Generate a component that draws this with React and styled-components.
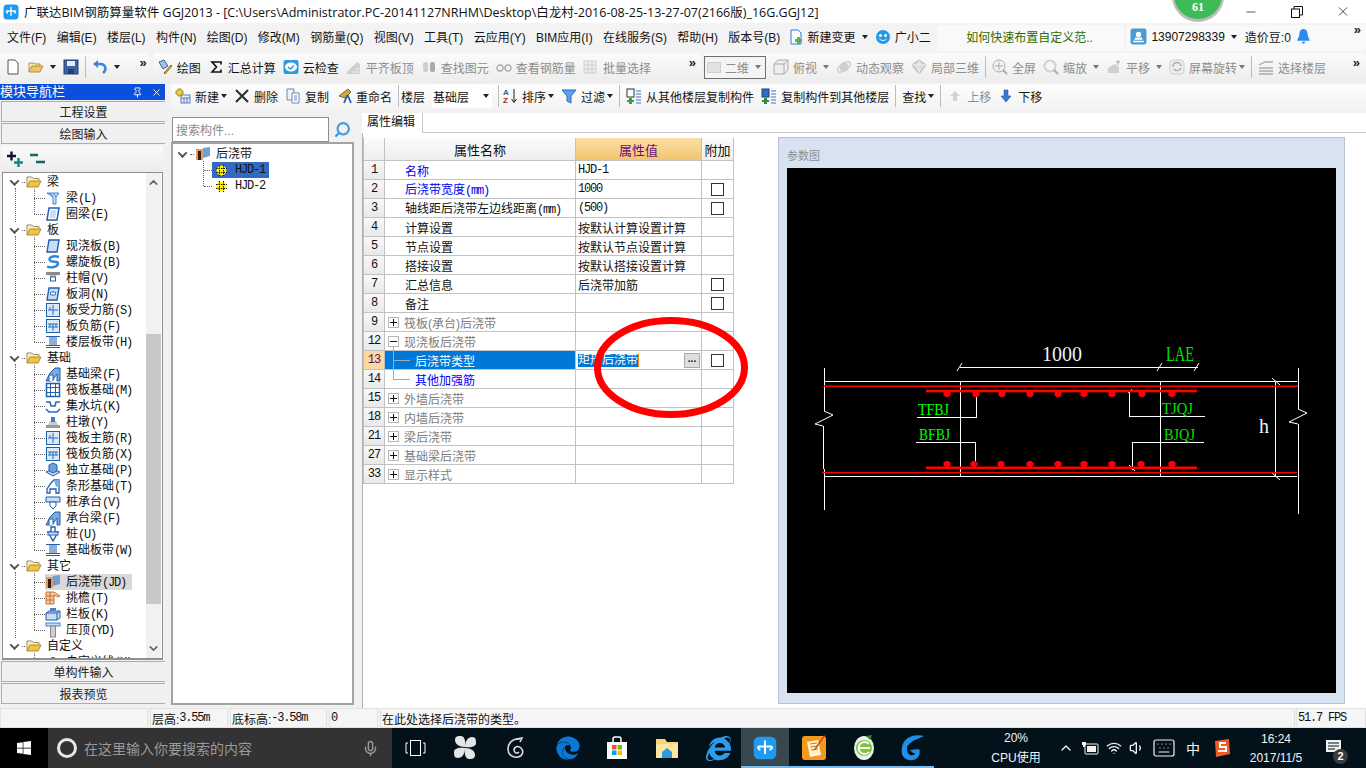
import React from "react";
import styled, { createGlobalStyle } from "styled-components";
import { FaEdge, FaInternetExplorer, FaWindows } from "react-icons/fa";
import { Mic, ChevronUp, Wifi, Volume1, Keyboard, Minus, X, Pin, Search } from "lucide-react";

const GlobalStyle = createGlobalStyle`
  html, body { margin: 0; padding: 0; overflow: hidden; }
  body { font-family: "Liberation Sans", "Noto Sans CJK SC", sans-serif; font-size: 12px; color: #111; }
  * { box-sizing: border-box; }
`;

const Page = styled.div`
  width: 1366px;
  height: 768px;
  display: flex;
  flex-direction: column;
  background: #f1f1f1;
  overflow: hidden;
  position: relative;
`;

/* title bar */
const TitleBar = styled.div`
  height: 23px;
  background: #fff;
  display: flex;
  align-items: center;
  padding-left: 3px;
  gap: 5px;
  position: relative;
`;
const TitleText = styled.div`
  font-family: "Open Sans", "Noto Sans CJK SC", sans-serif;
  font-size: 12.5px;
  white-space: nowrap;
  color: #111;
`;
const WindowButtons = styled.div`
  margin-left: auto;
  display: flex;
  align-items: center;
  width: 138px;
  color: #111;
  svg { flex: 1; }
`;
const Bubble = styled.div`
  position: absolute;
  left: 1174px;
  top: -29px;
  width: 48px;
  height: 48px;
  border-radius: 50%;
  background: #3dbb57;
  box-shadow: 0 1px 0 2px #bdbdbd;
  color: #fff;
  font-family: "Liberation Serif", serif;
  font-weight: bold;
  font-size: 12px;
  display: flex;
  justify-content: center;
  align-items: flex-end;
  padding-bottom: 4px;
`;

/* menu */
const MenuBar = styled.div`
  height: 30px;
  background: #f3f3f3;
  display: flex;
  align-items: center;
  padding: 0 0 3px 7px;
  gap: 10.3px;
`;
const MenuItem = styled.span`
  white-space: nowrap;
  color: #151515;
`;
const MenuGroup = styled.div`
  display: flex;
  align-items: center;
  gap: 4px;
  margin-left: -3px;
  white-space: nowrap;
`;
const TipTab = styled.div`
  width: 187px;
  height: 26px;
  margin: 3px 0 0 -4px;
  background: #f9f9f9;
  border-radius: 3px;
  color: #2f6a00;
  display: flex;
  align-items: center;
  padding: 0 0 3px 29px;
`;
const UserBlock = styled.div`
  display: flex;
  align-items: center;
  flex: 1;
  height: 26px;
  background: #f9f9f9;
  border-radius: 3px;
  margin: 3px 0 0 -8px;
  padding: 0 5px 3px 4px;
  gap: 4px;
`;
const BeanText = styled.span`
  margin-left: 4px;
`;
const More = styled.span`
  font-family: "Liberation Sans", sans-serif;
  font-weight: bold;
  font-size: 13px;
  line-height: 10px;
  align-self: flex-start;
  margin-top: ${(p) => p.$top ?? 5}px;
  margin-left: ${(p) => (p.$auto ? "auto" : "0")};
  color: #222;
`;

/* toolbars */
const ToolRow = styled.div`
  height: 30px;
  display: flex;
  align-items: stretch;
  background: #f1f1f1;
`;
const ToolSegment = styled.div`
  width: ${(p) => p.$w}px;
  margin-left: ${(p) => p.$ml || 0}px;
  padding: 0 ${(p) => p.$pr || 0}px 2px ${(p) => p.$pl || 0}px;
  background: linear-gradient(#fbfbfb, #ececec);
  border-radius: 3px;
  display: flex;
  align-items: center;
  gap: 7px;
`;
const ToolItem = styled.div`
  display: flex;
  align-items: center;
  gap: 4px;
  white-space: nowrap;
  color: ${(p) => (p.$off ? "#8d8d8d" : "#151515")};
`;
const Caret = styled.i`
  width: 0;
  height: 0;
  flex: none;
  margin-left: ${(p) => (p.$tight ? -2 : 2)}px;
  border-left: 3.5px solid transparent;
  border-right: 3.5px solid transparent;
  border-top: 4px solid ${(p) => (p.$off ? "#777" : "#222")};
`;
const Sep = styled.i`
  width: 1px;
  height: 22px;
  background: #bdbdbd;
  margin: 0 ${(p) => p.$r ?? -1}px 0 -1px;
`;
const ViewCombo = styled.div`
  width: 62px;
  height: 23px;
  border: 1px solid #6f6f6f;
  background: #f4f4f4;
  display: flex;
  align-items: center;
  gap: 4px;
  padding-left: 2px;
  white-space: nowrap;
  color: #8d8d8d;
`;
const ComboSwatch = styled.i`
  width: 14px;
  height: 11px;
  flex: none;
  background: #e2e2e2;
  border: 1px solid #cfcfcf;
`;
const ToolbarTwo = styled.div`
  height: 26px;
  background: linear-gradient(#fdfdfd, #f3f3f3);
  display: flex;
  align-items: center;
  gap: 7px;
  padding: 0 0 2px 4px;
`;
const FloorCombo = styled.div`
  width: 60px;
  height: 24px;
  background: #fff;
  display: flex;
  align-items: center;
  justify-content: space-between;
  padding: 0 3px 0 1px;
`;

/* body */
const Body = styled.div`
  height: 625px;
  display: flex;
  padding-top: 1px;
`;
const NavColumn = styled.div`
  width: 165px;
  display: flex;
  flex-direction: column;
`;
const NavHeader = styled.div`
  height: 16px;
  background: #0a50dc;
  color: #fff;
  font-size: 13px;
  display: flex;
  align-items: center;
  line-height: 16px;
  svg:first-of-type { margin-left: auto; }
  svg:last-of-type { margin: 0 3px 0 8px; }
`;
const NavButton = styled.div`
  height: 21px;
  margin: 1px 0 0 1px;
  background: #f0f0f0;
  border: 1px solid #adadad;
  border-width: 1px 0 1px 1px;
  display: flex;
  align-items: center;
  justify-content: center;
  color: #222;
`;
const ExpandBar = styled.div`
  height: 26px;
  margin: 2px 2px 0;
  background: linear-gradient(#fafafa, #ececec);
  display: flex;
  align-items: center;
  padding-left: 5px;
  gap: 6px;
`;
const TreeFrame = styled.div`
  height: 488px;
  margin: 0 2px;
  background: #fff;
  border: 1px solid #8f8f8f;
  border-bottom-width: 2px;
  display: flex;
  overflow: hidden;
`;
const TreeBody = styled.div`
  flex: 1;
  overflow: hidden;
  padding-top: 1px;
`;
const Scrollbar = styled.div`
  width: 15px;
  margin-right: 1px;
  background: #f1f1f1;
  display: flex;
  flex-direction: column;
  align-items: center;
  color: #666;
`;
const ScrollThumb = styled.div`
  width: 15px;
  height: 270px;
  background: #c8c8c8;
`;
const ScrollGap = styled.div`
  height: ${(p) => p.$h}px;
  flex: ${(p) => (p.$fill ? 1 : "none")};
  display: flex;
  align-items: center;
`;
const Group = styled.div`
  position: relative;
  &::before {
    content: "";
    position: absolute;
    left: 12px;
    top: 14px;
    bottom: 0;
    border-left: 1px dotted #666;
    display: ${(p) => (p.$open ? "block" : "none")};
  }
`;
const GroupRow = styled.div`
  height: 16px;
  display: flex;
  align-items: center;
  padding-left: ${(p) => p.$pad || 8}px;
  gap: 1px;
  line-height: 16px;
  font-size: 12px;
`;
const Chevron = styled.i`
  width: 7px;
  height: 7px;
  border: solid #555;
  border-width: 0 2px 2px 0;
  transform: rotate(45deg) translate(-1px, -1px);
  margin-right: 3px;
  flex: none;
`;
const DotLead = styled.i`
  width: ${(p) => p.$w || 3}px;
  border-top: 1px dotted #666;
  flex: none;
`;
const GroupName = styled.span`
  margin-left: 4px;
`;
const Leaves = styled.div`
  position: relative;
  &::before {
    content: "";
    position: absolute;
    left: ${(p) => p.$x || 31}px;
    top: -1px;
    bottom: 8px;
    border-left: 1px dotted #666;
  }
`;
const Leaf = styled.div`
  height: 16px;
  display: flex;
  align-items: center;
  margin-left: ${(p) => p.$x || 31}px;
  line-height: 16px;
  white-space: nowrap;
`;
const LeafLead = styled.i`
  width: ${(p) => p.$w || 11}px;
  border-top: 1px dotted #666;
  flex: none;
`;
const LeafLabel = styled.div`
  display: flex;
  align-items: center;
  height: 16px;
  gap: ${(p) => p.$gap ?? 5}px;
  padding-right: ${(p) => p.$pr || 0}px;
  background: ${(p) => p.$bg || "transparent"};
`;
const GearSlot = styled.span`
  display: flex;
  margin-left: 4px;
`;
const Code = styled.span`
  font-family: "Liberation Mono", monospace;
  font-size: 12px;
  letter-spacing: -1.2px;
`;

/* right side */
const RightSide = styled.div`
  flex: 1;
  margin-left: 6px;
  display: flex;
  flex-direction: column;
`;
const Split = styled.div`
  flex: 1;
  display: flex;
`;
const ListColumn = styled.div`
  width: 183px;
  padding-top: 7px;
  display: flex;
  flex-direction: column;
`;
const SearchRow = styled.div`
  height: 25px;
  display: flex;
  align-items: center;
  gap: 5px;
  padding-left: 1px;
  color: #3d9be9;
  svg { transform: scaleX(-1); }
`;
const SearchBox = styled.div`
  width: 157px;
  height: 25px;
  background: #fff;
  border: 1px solid #8f8f8f;
  color: #8a8a8a;
  font-size: 12px;
  display: flex;
  align-items: center;
  padding-left: 3px;
`;
const ListTree = styled.div`
  height: 563px;
  background: #fff;
  border: 2px solid #a3a3a3;
  padding-top: 2px;
`;
const PropPane = styled.div`
  flex: 1;
  margin-left: 8px;
  padding-top: 3px;
  display: flex;
  flex-direction: column;
`;
const TabStrip = styled.div`
  height: 20px;
  display: flex;
  border-bottom: 1px solid #c8c8c8;
  background: #fff;
`;
const Tab = styled.div`
  width: 61px;
  height: 20px;
  padding-left: 5px;
  background: #fff;
  border-right: 1px solid #c8c8c8;
  line-height: 19px;
`;
const PropBody = styled.div`
  flex: 1;
  display: flex;
  align-items: flex-start;
  padding: 4px 0 3px 0;
  border-left: 1px solid #b0b0b0;
  background: #fff;
  gap: 45px;
`;
const TableWrap = styled.div`
  position: relative;
  width: 371px;
  margin-top: 1px;
  border-left: 1px solid #c0c0c0;
`;
const GridRow = styled.div`
  display: grid;
  grid-template-columns: 21px 191px 126px 32px;
  height: ${(p) => p.$h || 19}px;
  border-bottom: 1px solid #c2c2c2;
`;
const NumCell = styled.div`
  background: ${(p) => (p.$on ? "#fcd9a0" : "linear-gradient(#f8f8f8, #e9e9e9)")};
  border-right: 1px solid #c2c2c2;
  display: flex;
  align-items: center;
  justify-content: center;
  font-family: "Liberation Mono", monospace;
  font-size: 12px;
  letter-spacing: -1px;
  color: ${(p) => (p.$on ? "#60106a" : "#111")};
`;
const HeadCell = styled.div`
  background: ${(p) => (p.$hot ? "linear-gradient(#fbdfa8, #f2c56e)" : "linear-gradient(#fbfbfb, #eeeeee)")};
  color: ${(p) => (p.$hot ? "#6d0b7e" : "#111")};
  border-right: 1px solid #c2c2c2;
  font-size: 13px;
  display: flex;
  align-items: center;
  justify-content: center;
`;
const colors = { blue: "#0000f0", black: "#111", gray: "#7d7d7d", white: "#fff" };
const NameCell = styled.div`
  position: relative;
  display: flex;
  align-items: center;
  gap: 5px;
  padding-left: ${(p) => p.$pad}px;
  color: ${(p) => colors[p.$tone]};
  background: ${(p) => (p.$on ? "#0078d7" : "transparent")};
  border-right: 1px solid #c2c2c2;
  white-space: nowrap;
  &::before {
    content: "";
    display: ${(p) => (p.$branch ? "block" : "none")};
    position: absolute;
    left: 8px;
    top: ${(p) => (p.$branch === "first" ? -4 : -1)}px;
    height: ${(p) => (p.$branch === "first" ? 23 : 10)}px;
    border-left: 1px solid #a9a9a9;
  }
  &::after {
    content: "";
    display: ${(p) => (p.$branch ? "block" : "none")};
    position: absolute;
    left: 8px;
    top: 9px;
    width: 17px;
    border-top: 1px solid #a9a9a9;
  }
`;
const Expander = styled.i`
  width: 11px;
  height: 11px;
  border: 1px solid #b5b5b5;
  position: relative;
  margin-left: -17px;
  flex: none;
  &::before {
    content: "";
    position: absolute;
    left: 1px;
    right: 1px;
    top: 4px;
    border-top: 1px solid #111;
  }
  &::after {
    content: "";
    display: ${(p) => (p.$plus ? "block" : "none")};
    position: absolute;
    top: 1px;
    bottom: 1px;
    left: 4px;
    border-left: 1px solid #111;
  }
`;
const ValueCell = styled.div`
  display: flex;
  align-items: center;
  padding-left: 2px;
  border-right: 1px solid #c2c2c2;
  white-space: nowrap;
  color: #111;
`;
const SelectedValue = styled.span`
  background: #0078d7;
  color: #fff;
  border-right: 1px solid #f28a1c;
  line-height: 13px;
`;
const DotButton = styled.span`
  margin-left: auto;
  margin-right: 1px;
  width: 16px;
  height: 15px;
  background: #dedede;
  border: 1px solid #a9a9a9;
  font-weight: bold;
  font-size: 10px;
  line-height: 9px;
  text-align: center;
`;
const AddCell = styled.div`
  display: flex;
  align-items: center;
  justify-content: center;
  border-right: 1px solid #c2c2c2;
  padding-right: 1px;
`;
const Check = styled.i`
  width: 13px;
  height: 13px;
  border: 1px solid #333;
  background: #fff;
`;
const CircleMark = styled.svg`
  position: absolute;
  left: 230px;
  top: 179px;
  pointer-events: none;
`;
const ParamPanel = styled.div`
  width: 567px;
  height: 567px;
  margin-left: -1px;
  display: flex;
  flex-direction: column;
  padding: 0 8px 10px;
  background: #d7e3f1;
  border: 1px solid #b8c4d2;
`;
const ParamTitle = styled.div`
  height: 30px;
  display: flex;
  align-items: flex-end;
  padding-bottom: 5px;
  color: #8b8f96;
  font-size: 11px;
`;
const Canvas = styled.svg`
  display: block;
  background: #000;
  flex: 1;
  width: 549px;
`;

/* status */
const StatusBar = styled.div`
  height: 20px;
  display: flex;
  gap: 2px;
  background: #f1f1f1;
`;
const StatusCell = styled.div`
  width: ${(p) => p.$w}px;
  margin-left: ${(p) => p.$ml || 0}px;
  background: #f5f5f5;
  border: 1px solid #e2e2e2;
  display: flex;
  align-items: center;
  padding-left: 1px;
  white-space: nowrap;
`;

/* taskbar */
const Taskbar = styled.div`
  height: 40px;
  background: #03121a;
  display: flex;
  align-items: stretch;
  color: #fff;
`;
const StartCell = styled.div`
  width: 48px;
  background: #000;
  display: flex;
  align-items: center;
  justify-content: center;
`;
const CortanaBox = styled.div`
  width: 344px;
  background: #333;
  display: flex;
  align-items: center;
  padding: 0 13px 0 9px;
  gap: 7px;
  color: #9a9a9a;
  font-size: 14px;
  svg { margin-left: auto; }
`;
const CortanaRing = styled.i`
  width: 20px;
  height: 20px;
  border: 3px solid #e8e8e8;
  border-radius: 50%;
  flex: none;
`;
const TaskApps = styled.div`
  width: 544px;
  display: flex;
  align-items: stretch;
`;
const TaskApp = styled.div`
  width: ${(p) => p.$w || 49}px;
  display: flex;
  align-items: center;
  justify-content: center;
  background: ${(p) => (p.$active ? "#39474e" : "transparent")};
  box-shadow: ${(p) => (p.$run ? "inset 0 -2px 0 #76b9ed" : "none")};
`;
const TrayText = styled.div`
  display: flex;
  flex-direction: column;
  align-items: center;
  justify-content: space-around;
  width: ${(p) => p.$w}px;
  margin-left: ${(p) => p.$ml || 0}px;
  padding: 1px 0;
  white-space: nowrap;
  color: #f2f2f2;
`;
const Tray = styled.div`
  display: flex;
  align-items: center;
  gap: 7px;
  margin-left: 17px;
  color: #f2f2f2;
  width: 187px;
  flex: none;
`;
const ImeLabel = styled.span`
  font-size: 14px;
  margin: 0 6px 0 3px;
`;
const NoticeCell = styled.div`
  position: relative;
  flex: 1;
  display: flex;
  align-items: center;
  padding: 0 0 5px 18px;
`;
const NoticeBadge = styled.span`
  position: absolute;
  left: 26px;
  top: 21px;
  width: 15px;
  height: 15px;
  background: #3a3a3a;
  border-radius: 50%;
  font-size: 11px;
  font-weight: bold;
  text-align: center;
  line-height: 15px;
`;

/* drawings */
const blue = "#1f5fb0";
const lite = "#c9ddf6";
const Svg = ({ s = 16, children }) => (
  <svg width={s} height={s} viewBox="0 0 16 16" style={{ flex: "none" }}>{children}</svg>
);
const shapes = {
  beam: <><path d="M2 3h12l-3 4v7H8V7z" fill={lite} stroke="#3b85d6" /><path d="M5 3l3 4M8 3l3 4" stroke="#3b85d6" /></>,
  ring: <><path d="M4 2h10l-2 12H2z" fill="#fff" stroke={blue} strokeWidth="1.5" /><path d="M5.5 4h6l-1 8H4.500z" fill={lite} /></>,
  slab: <path d="M4 2h10l-2 12H2z" fill={lite} stroke={blue} strokeWidth="1.4" />,
  spiral: <path d="M14 3C7 1 3 4 5 6.500s8 0 8 3-6 5-11 3" fill="none" stroke="#2a86d8" strokeWidth="2.4" />,
  cap: <><rect x="1" y="2" width="14" height="3" fill="#8c8c8c" /><path d="M4 5h8l-2 2H6z" fill="#bbb" /><rect x="5.500" y="7" width="5" height="4" fill="#fff" stroke={blue} /></>,
  hole: <><path d="M4 2h10l-2 12H2z" fill={lite} stroke={blue} strokeWidth="1.4" /><rect x="5.500" y="6" width="5" height="3" rx="1" fill="#fff" stroke={blue} /></>,
  plate: <><rect x="1.500" y="1.500" width="13" height="13" fill="#dce9fa" stroke={blue} /><path d="M8 3v10M3 8h10M5 5v3" stroke="#2a6ab8" /></>,
  neg: <><rect x="1.500" y="1.500" width="13" height="13" fill="#dce9fa" stroke={blue} /><path d="M3 6h10M3 9h10M8 6v7M5 6v3M11 6v3" stroke="#2a6ab8" /></>,
  band: <path d="M1 2.500h14M1 13.500h14M1 11.500h14M5 3v8M11 3v8M7 3v8M9 3v8" stroke={blue} fill="none" />,
  fbeam: <><path d="M1 15l4-8 5-5h5v13h-3V8L7 15z" fill="#7ea9dc" stroke={blue} /><path d="M4 15V9h4v6" fill="#fff" stroke={blue} /></>,
  raft: <><rect x="1.500" y="1.500" width="13" height="13" fill="#fff" stroke={blue} strokeWidth="1.5" /><path d="M1.500 5.500h13M1.500 10.500h13M5.500 1.500v13M10.500 1.500v13" stroke={blue} /></>,
  pit: <path d="M1 4h4l1 4h4l1-4h4M1 11l3 3h8l3-3" fill="none" stroke="#2a6ab8" strokeWidth="1.6" />,
  pier: <><rect x="1" y="11" width="14" height="3" fill="#9a9a9a" /><path d="M3 11l2-4h6l2 4z" fill="#c9c9c9" /><rect x="6" y="3" width="4" height="5" fill="#3b7ccb" /></>,
  iso: <><path d="M1 10l7-3 7 3-7 4z" fill={lite} stroke={blue} /><path d="M4 3l4-2 4 2v6l-4 2-4-2z" fill="#6f9fd8" stroke={blue} /></>,
  strip: <><path d="M2 15V11l4-6 3-3h5v13h-3v-4H5v4z" fill="#fff" stroke={blue} strokeWidth="1.3" /><path d="M9 2h5v6l-3 1z" fill="#7ea9dc" /></>,
  pcap: <><path d="M1 3h14v5H1z" fill={lite} stroke={blue} /><path d="M5 8h6v4l-3 3-3-3z" fill="#fff" stroke={blue} /></>,
  pile: <><path d="M6 1h4v5h3l-5 9-5-9h3z" fill="#fff" stroke={blue} strokeWidth="1.4" /><rect x="3" y="6" width="10" height="3" fill={lite} stroke={blue} /></>,
  cast: <><rect x="1" y="3" width="7" height="11" fill="#d7a06a" /><rect x="3" y="5" width="3" height="9" fill="#3a1c0c" /><path d="M8 2l7-1v9l-7 2z" fill="#6f9fd8" /></>,
  eave: <><path d="M1 2h8l6 4-2 1-4-2v9H1z" fill="#f6c9a2" stroke="#c8702e" /><path d="M1 6h8M1 10h8M5 2v12" stroke="#c8702e" /></>,
  rail: <><path d="M1 7l3-2h11v7l-3 2H1z" fill={lite} stroke={blue} /><path d="M1 7h11v7M12 7l3-2" stroke={blue} fill="none" /><rect x="5" y="2" width="6" height="3" fill="#4a83c9" /></>,
  top: <><rect x="1" y="1" width="14" height="3" fill={lite} stroke="#3b85d6" /><rect x="5.500" y="4" width="5" height="11" fill="#cfcfcf" stroke="#888" /></>
};
const TreeIcon = ({ kind }) => <Svg>{shapes[kind]}</Svg>;
const Folder = () => (
  <Svg>
    <path d="M1 13V3h5l1.500 1.500H13V7" fill="#f6eccb" stroke="#a68b52" />
    <path d="M1 13l3-6h11l-3 6z" fill="#f4c33e" stroke="#b08a36" />
  </Svg>
);
const Gear = () => (
  <svg width="11" height="11" viewBox="0 0 11 11">
    <circle cx="5.500" cy="5.500" r="5" fill="#fff200" />
    <path d="M3.500 0v11M7.500 0v11M0 3.500h11M0 7.500h11" stroke="#111" strokeDasharray="1.500 1" />
  </svg>
);

const gray = "#cfcfcf";
const grayDark = "#ababab";
const tool = {
  newDoc: <path d="M3 1h7l3 3v11H3z" fill="#fff" stroke="#555" />,
  open: <><path d="M1 13V4h5l1 1h5v2" fill="#f7e8b5" stroke="#b1904a" /><path d="M1 13l3-6h11l-3 6z" fill="#f0c566" stroke="#b1904a" /></>,
  save: <><rect x="1" y="1" width="14" height="14" fill="#3a63a8" stroke="#223f74" /><rect x="4" y="2" width="8" height="5" fill="#e4ecf7" /><rect x="5" y="10" width="6" height="5" fill="#223f74" /></>,
  undo: <><path d="M11 14c4-3 3-9-3-9H4" fill="none" stroke="#3f86d8" strokeWidth="2.6" /><path d="M6 1L1 5l5 4z" fill="#3f86d8" /></>,
  draw: <><path d="M2 3l5-2 4 6-5 3z" fill="#9cc3ea" stroke="#44638a" /><path d="M7 14l7-8 1 1-7 8z" fill="#e8b93c" stroke="#8b6b1b" /></>,
  cloud: <><rect x="0.500" y="1" width="15" height="14" rx="2" fill="#2b9be0" /><ellipse cx="8" cy="8" rx="6" ry="4.500" fill="#fff" /><path d="M5 8l2.500 2L11 6.500" fill="none" stroke="#2b9be0" strokeWidth="1.5" /></>,
  align: <><path d="M1 13L11 3l3 2v10H1z" fill={gray} /><path d="M6 13h8M9 10h5" stroke="#eee" /></>,
  find: <><rect x="2" y="3" width="5" height="10" rx="2" fill={gray} /><rect x="9" y="3" width="5" height="10" rx="2" fill={grayDark} /></>,
  look: <><path d="M1 9a3 3 0 106 0 3 3 0 10-6 0zM9 9a3 3 0 106 0 3 3 0 10-6 0z" fill="none" stroke={grayDark} strokeWidth="1.3" /><path d="M7 9h2" stroke={grayDark} /></>,
  batch: <><rect x="1" y="2" width="12" height="12" fill="#eee" stroke={gray} /><path d="M1 6h12M1 10h12M5 2v12M9 2v12" stroke={gray} /></>,
  cube: <><path d="M1 5l4-4h10v10l-4 4H1z" fill="#eee" stroke={grayDark} /><path d="M1 5h10v10M11 5l4-4" fill="none" stroke={grayDark} /></>,
  orbit: <><ellipse cx="8" cy="8" rx="7.500" ry="3.500" transform="rotate(-35 8 8)" fill="none" stroke={gray} strokeWidth="1.5" /><circle cx="8" cy="8" r="4.500" fill={gray} /></>,
  local: <><path d="M8 1l7 5-7 9-7-9z" fill="#ddd" stroke={grayDark} /><path d="M1 6h14M8 1v14" stroke="#eee" /></>,
  full: <><circle cx="7" cy="7" r="6" fill="#f2f2f2" stroke={grayDark} /><path d="M7 3v8M3 7h8" stroke={grayDark} /><path d="M11 11l4 4" stroke={grayDark} strokeWidth="2" /></>,
  zoom: <><circle cx="7" cy="7" r="5.500" fill="#f5f5f5" stroke={gray} strokeWidth="2" /><path d="M11 11l4 4" stroke={grayDark} strokeWidth="2" /></>,
  pan: <><path d="M2 14V9l3-2 4-2 4 3v6z" fill={gray} /><path d="M12 1v5M10 3h4" stroke={grayDark} /></>,
  rotate: <><rect x="1" y="1" width="14" height="14" rx="3" fill="#eee" stroke={gray} /><path d="M4 8a4 4 0 018-1M12 9a4 4 0 01-7 1" fill="none" stroke={grayDark} strokeWidth="1.4" /></>,
  floors: <path d="M1 6l6-3h8M1 9h14M1 12h14M1 15h14" fill="none" stroke={grayDark} strokeWidth="1.3" />,
  add: <><rect x="6" y="7" width="9" height="8" fill="#e2ebf7" stroke="#5a7fb5" /><path d="M6 10h9M9 10v5M12 10v5" stroke="#5a7fb5" /><path d="M3 1h3v2h2v3H6v2H3V6H1V3h2z" fill="#f1d447" stroke="#a38d1e" /></>,
  del: <path d="M2 2l12 12M14 2L2 14" stroke="#333" strokeWidth="2.2" />,
  copy: <><path d="M2 1h7v11H2z" fill="#eef3fb" stroke="#6b87b3" /><path d="M7 5h7v10H7z" fill="#fff" stroke="#6b87b3" /><path d="M9 8h3M9 10h3M9 12h3" stroke="#6b87b3" /></>,
  rename: <><path d="M3 8l9-7 3 3-6 6z" fill="#d2a83e" stroke="#7a6a2a" /><path d="M8 15l3-7h1l3 7" fill="none" stroke="#2f5fa8" strokeWidth="1.8" /></>,
  filter: <path d="M1 2h14l-5 6v7l-4-2V8z" fill="#5fa1e6" stroke="#2f6cb5" />,
  fromFloor: <><rect x="1" y="1" width="7" height="8" fill="#fff" stroke="#333" /><path d="M10 3h5M10 6h5M10 9h5M10 12h5M10 15h5" stroke="#3a74bd" /><path d="M3 10h3v2h2v2H6v2H3v-2H1v-2h2z" fill="#3aa043" /></>,
  toFloor: <><rect x="1" y="1" width="7" height="8" fill="#2f6cc5" stroke="#1a3f7a" /><path d="M10 3h5M10 6h5M10 9h5M10 12h5M10 15h5" stroke="#3a74bd" /><path d="M3 10h3v2h2v2H6v2H3v-2H1v-2h2z" fill="#2f8a3a" /></>,
  up: <path d="M8 3l5 5h-3v5H6V8H3z" fill="#d3d3d3" />,
  down: <path d="M6 2h4v6h3l-5 6-5-6h3z" fill="#3f74d0" stroke="#2c55a0" strokeWidth="0.6" />
};
const ToolIcon = ({ kind }) => <Svg>{tool[kind]}</Svg>;
const SigmaIcon = () => (
  <Svg><path d="M3 3h10v2.500M13 3H4l4.500 5L4 13h9v-2.500" fill="none" stroke="#111" strokeWidth="1.6" /></Svg>
);
const SortIcon = () => (
  <Svg>
    <text x="1" y="7" fontSize="8" fontFamily="Liberation Sans" fill="#2f5fa8" fontWeight="bold">A</text>
    <text x="1" y="15" fontSize="8" fontFamily="Liberation Sans" fill="#a02a2a" fontWeight="bold">Z</text>
    <path d="M12 1v13M9.500 11l2.500 3.500 2.500-3.500" fill="none" stroke="#222" />
  </Svg>
);
const AppLogo = ({ s = 16 }) => (
  <Svg s={s}>
    <rect x="0.500" y="0.500" width="15" height="15" rx="3.500" fill="#1e9bf0" />
    <path d="M8 3v9M3.500 7h9M3.500 7a1.500 1.500 0 001.500 2M12.500 7a1.500 1.500 0 01-1.500 2" fill="none" stroke="#fff" strokeWidth="1.3" />
  </Svg>
);
const ExpandAllIcon = ({ minus }) => (
  <Svg>
    {minus ? (
      <path d="M1 4h8M7 11h9" stroke="#0d6a66" strokeWidth="2.4" />
    ) : (
      <>
        <path d="M0 5h9M4.500 0.500v9" stroke="#113" strokeWidth="2.4" />
        <path d="M7 11.500h9M11.500 7v9" stroke="#0d8a7e" strokeWidth="2.4" />
      </>
    )}
  </Svg>
);
const RestoreIcon = () => (
  <svg width="12" height="12" viewBox="0 0 12 12" fill="none" stroke="#111">
    <rect x="0.500" y="3" width="8" height="8.500" />
    <path d="M3 3V0.500h8.500V9H8.500" />
  </svg>
);

const Fan = () => (
  <svg width="24" height="26" viewBox="0 0 24 26">
    <g fill="#e4e4e4">
      <path d="M12 12C6 12 2 9 2 5s3-4 6-4 5 4 4 11z" />
      <path d="M12 12c0-6 3-10 7-10s4 3 4 6-4 5-11 4z" />
      <path d="M12 13c6 0 10 3 10 7s-3 4-6 4-5-4-4-11z" />
      <path d="M12 13c0 6-3 10-7 10s-4-3-4-6 4-5 11-4z" />
    </g>
  </svg>
);
const Swirl = () => (
  <svg width="20" height="24" viewBox="0 0 20 24" fill="none" stroke="#ddd" strokeWidth="1.6">
    <path d="M14 3C7 2 2 7 2 13s5 9 10 8 6-6 3-9-7-1-7 2 3 4 5 2" />
    <path d="M10 3l6-1-2 4" />
  </svg>
);
const Store = () => (
  <svg width="22" height="24" viewBox="0 0 22 24">
    <path d="M1 6h20v17H1z" fill="#fff" />
    <path d="M7 6V3a2 2 0 012-2h4a2 2 0 012 2v3" fill="none" stroke="#fff" strokeWidth="1.5" />
    <rect x="6" y="9" width="4.500" height="4.500" fill="#f25022" />
    <rect x="11.500" y="9" width="4.500" height="4.500" fill="#7fba00" />
    <rect x="6" y="14.500" width="4.500" height="4.500" fill="#00a4ef" />
    <rect x="11.500" y="14.500" width="4.500" height="4.500" fill="#ffb900" />
  </svg>
);
const Explorer = () => (
  <svg width="24" height="24" viewBox="0 0 24 24">
    <path d="M1 3h9l2 3h11v16H1z" fill="#f4d675" />
    <path d="M1 8h22v14H1z" fill="#fbe6a2" />
    <path d="M7 22v-6l5-4 5 4v6z" fill="#2f9ae0" />
  </svg>
);
const Notes = () => (
  <svg width="24" height="26" viewBox="0 0 24 26">
    <rect x="0" y="1" width="24" height="24" rx="3" fill="#f39a1e" />
    <path d="M5 7l11-2 3 15-11 2z" fill="#fff3cf" />
    <path d="M8 9l7-1M8.500 12l7-1M9 15l7-1" stroke="#c47a18" />
    <path d="M22 0l-9 13-2 3 3-2 9-13z" fill="#c8421a" />
  </svg>
);
const GreenE = () => (
  <svg width="24" height="28" viewBox="0 0 24 28">
    <ellipse cx="12" cy="14" rx="10" ry="12" fill="#eee" />
    <circle cx="12" cy="14" r="8" fill="#7cc63a" />
    <path d="M6 14h12M17 10a6 6 0 100 8" fill="none" stroke="#fff" strokeWidth="1.8" />
    <path d="M14 2l6-1-2 5z" fill="#2e8a28" />
  </svg>
);
const BlueG = () => (
  <svg width="26" height="28" viewBox="0 0 26 28">
    <path d="M25 2c-8-2-20 0-22 11s5 14 11 13 8-7 6-11l-9 1 3 3h2c0 3-7 4-8-3s8-10 17-14z" fill="#1f8fe8" />
  </svg>
);
const Power = () => (
  <svg width="18" height="16" viewBox="0 0 18 16" fill="#f2f2f2">
    <rect x="4" y="4" width="13" height="10" rx="1" fill="none" stroke="#f2f2f2" />
    <rect x="6" y="6" width="9" height="6" />
    <path d="M1 2h4v3H1zM2 5h2v2H2z" />
  </svg>
);
const SogouS = () => (
  <svg width="18" height="20" viewBox="0 0 18 20" style={{ flex: "none" }}>
    <path d="M2 3l14-2 1 15-14 3z" fill="#ee5c25" />
    <path d="M13 5H7v4h6v4H5" fill="none" stroke="#fff" strokeWidth="2" />
  </svg>
);
const NoticeIcon = () => (
  <svg width="17" height="14" viewBox="0 0 17 14">
    <path d="M1 1h15v12H1z" fill="#f2f2f2" />
    <path d="M3 4h11M3 7h11M3 10h7" stroke="#03121a" />
  </svg>
);

const Tick = ({ x, y }) => <path d={`M${x - 3} ${y + 4}L${x + 2} ${y - 4}`} stroke="#fff" />;
const Rebars = ({ xs, y }) =>
  xs.map((x) => (
    <path key={x} d={`M${x - 2} ${y - 3}h4v1h1.500v4h-1.500v1h-4v-1h-1.500v-4h1.500z`} fill="#ff0000" />
  ));
const Label = styled.text`
  font-family: "Liberation Serif", serif;
  fill: ${(p) => p.$fill};
`;

const Drawing = () => (
  <Canvas viewBox="787 168 549 525">
    <g fill="none" stroke="#fff" shapeRendering="crispEdges">
      <path d="M824.500 368V411M823.500 426V469M824.500 469V510" />
      <path d="M1298.500 368V409M1298.500 424V514" />
      <path d="M824 381.500H1297M824 476.500H1297" />
      <path d="M960.500 381V476M1160.500 381V476M1275.500 381V476" />
      <path d="M960 367.500H1198" />
      <path d="M917 417.500H976.500V394M916 442.500H975.500V468" />
      <path d="M1129.500 390V416.500H1205M1204 442.500H1132.500V470" />
    </g>
    <g fill="none" stroke="#fff">
      <path d="M824 411l9 4-18 9 8 2" />
      <path d="M1298 409l9 4-18 9 9 2" />
      <path d="M1272 378l8 7M1272 473l8 7M1128 393l4-4M1129 465l6 6" />
    </g>
    <Tick x={960} y={367} />
    <Tick x={1160} y={367} />
    <Tick x={1197} y={367} />
    <g fill="#ff0000">
      <rect x="824" y="385.500" width="474" height="1.500" />
      <rect x="926" y="389.700" width="271" height="2.600" />
      <rect x="926" y="466.500" width="271" height="2.600" />
      <rect x="822" y="471.800" width="475" height="1.500" />
    </g>
    <Rebars xs={[947, 976, 1002, 1030, 1058, 1084, 1112, 1142, 1172]} y={394} />
    <Rebars xs={[947, 974, 1001, 1030, 1058, 1084, 1112, 1141, 1172]} y={464} />
    <Label x="1042" y="361" fontSize="20" textLength="40" lengthAdjust="spacingAndGlyphs" $fill="#e8f2ff">1000</Label>
    <Label x="1166" y="361" fontSize="20" textLength="28" lengthAdjust="spacingAndGlyphs" $fill="#00e000">LAE</Label>
    <Label x="918" y="415" fontSize="16" textLength="31" lengthAdjust="spacingAndGlyphs" $fill="#00ff00">TFBJ</Label>
    <Label x="919" y="440" fontSize="16" textLength="31" lengthAdjust="spacingAndGlyphs" $fill="#00ff00">BFBJ</Label>
    <Label x="1162" y="414" fontSize="16" textLength="31" lengthAdjust="spacingAndGlyphs" $fill="#00e000">TJQJ</Label>
    <Label x="1164" y="440" fontSize="16" textLength="31" lengthAdjust="spacingAndGlyphs" $fill="#00e000">BJQJ</Label>
    <Label x="1259" y="433" fontSize="20" $fill="#e8f2ff">h</Label>
  </Canvas>
);

const menus = ["文件(F)", "编辑(E)", "楼层(L)", "构件(N)", "绘图(D)", "修改(M)", "钢筋量(Q)", "视图(V)", "工具(T)", "云应用(Y)", "BIM应用(I)", "在线服务(S)", "帮助(H)", "版本号(B)"];

const navTree = [
  ["梁", [["beam", "梁", "L"], ["ring", "圈梁", "E"]]],
  ["板", [["slab", "现浇板", "B"], ["spiral", "螺旋板", "B"], ["cap", "柱帽", "V"], ["hole", "板洞", "N"], ["plate", "板受力筋", "S"], ["neg", "板负筋", "F"], ["band", "楼层板带", "H"]]],
  ["基础", [["fbeam", "基础梁", "F"], ["raft", "筏板基础", "M"], ["pit", "集水坑", "K"], ["pier", "柱墩", "Y"], ["plate", "筏板主筋", "R"], ["neg", "筏板负筋", "X"], ["iso", "独立基础", "P"], ["strip", "条形基础", "T"], ["pcap", "桩承台", "V"], ["fbeam", "承台梁", "F"], ["pile", "桩", "U"], ["band", "基础板带", "W"]]],
  ["其它", [["cast", "后浇带", "JD"], ["eave", "挑檐", "T"], ["rail", "栏板", "K"], ["top", "压顶", "YD"]]],
  ["自定义", [["pier", "自定义线", "X"]]]
];

const rows = [
  { n: 1, name: "名称", tone: "blue", value: <Code>HJD-1</Code> },
  { n: 2, name: "后浇带宽度", unit: "(mm)", tone: "blue", value: <Code>1000</Code>, check: true },
  { n: 3, name: "轴线距后浇带左边线距离", unit: "(mm)", tone: "black", value: <Code>(500)</Code>, check: true },
  { n: 4, name: "计算设置", tone: "black", value: "按默认计算设置计算" },
  { n: 5, name: "节点设置", tone: "black", value: "按默认节点设置计算" },
  { n: 6, name: "搭接设置", tone: "black", value: "按默认搭接设置计算" },
  { n: 7, name: "汇总信息", tone: "black", value: "后浇带加筋", check: true },
  { n: 8, name: "备注", tone: "black", check: true },
  { n: 9, name: "筏板(承台)后浇带", tone: "gray", plus: true },
  { n: 12, name: "现浇板后浇带", tone: "gray", minus: true },
  { n: 13, name: "后浇带类型", tone: "white", on: true, branch: "first", check: true },
  { n: 14, name: "其他加强筋", tone: "blue", branch: "last" },
  { n: 15, name: "外墙后浇带", tone: "gray", plus: true },
  { n: 18, name: "内墙后浇带", tone: "gray", plus: true },
  { n: 21, name: "梁后浇带", tone: "gray", plus: true },
  { n: 27, name: "基础梁后浇带", tone: "gray", plus: true },
  { n: 33, name: "显示样式", tone: "gray", plus: true }
];

const PropRow = ({ r }) => (
  <GridRow>
    <NumCell $on={r.on}>{r.n}</NumCell>
    <NameCell $pad={r.branch ? 30 : 20} $tone={r.tone} $on={r.on} $branch={r.branch}>
      {(r.plus || r.minus) && <Expander $plus={r.plus} />}
      <span>{r.name}{r.unit && <Code>{r.unit}</Code>}</span>
    </NameCell>
    <ValueCell>
      {r.on ? <SelectedValue>矩形后浇带</SelectedValue> : r.value}
      {r.on && <DotButton>...</DotButton>}
    </ValueCell>
    <AddCell>{r.check && <Check />}</AddCell>
  </GridRow>
);

export default function App() {
  return (
    <Page>
      <GlobalStyle />
      <TitleBar>
        <AppLogo />
        <TitleText>广联达BIM钢筋算量软件 GGJ2013 - [C:\Users\Administrator.PC-20141127NRHM\Desktop\白龙村-2016-08-25-13-27-07(2166版)_16G.GGJ12]</TitleText>
        <WindowButtons>
          <Minus size={14} strokeWidth={1.2} />
          <RestoreIcon />
          <X size={15} strokeWidth={1.2} />
        </WindowButtons>
        <Bubble>61</Bubble>
      </TitleBar>

      <MenuBar>
        {menus.map((m) => <MenuItem key={m}>{m}</MenuItem>)}
        <MenuGroup>
          <Svg>
            <path d="M3 1h7l3 3v11H3z" fill="#fff" stroke="#2b7fd0" />
            <path d="M9 8h3v2h2v3h-2v2H9v-2H7v-3h2z" fill="#5eb14a" />
          </Svg>
          新建变更
          <Caret />
        </MenuGroup>
        <MenuGroup>
          <Svg>
            <circle cx="8" cy="8" r="7" fill="#1d9be8" />
            <circle cx="5.500" cy="6.500" r="1.500" fill="#fff" />
            <circle cx="10.500" cy="6.500" r="1.500" fill="#fff" />
            <path d="M4.500 10c2 2 5 2 7 0" fill="none" stroke="#fff" />
          </Svg>
          广小二
        </MenuGroup>
        <TipTab>如何快速布置自定义范..</TipTab>
        <UserBlock>
          <Svg s={17}>
            <rect x="0.500" y="0.500" width="15" height="15" rx="2" fill="#4a9bd1" />
            <circle cx="8" cy="6" r="2.500" fill="#fff" />
            <path d="M3 12h10v1.500H3zM5 9h6l1 2H4z" fill="#fff" />
          </Svg>
          <span>13907298339</span>
          <Caret />
          <BeanText>造价豆:0</BeanText>
          <Svg s={17}>
            <path d="M8 1c3 0 4 3 4 6l2 5H2l2-5c0-3 1-6 4-6z" fill="#2b8af0" />
            <path d="M6 13h4l-2 2z" fill="#2b8af0" />
          </Svg>
          <More $auto $top={0}>»</More>
        </UserBlock>
      </MenuBar>

      <ToolRow>
        <ToolSegment $w={150} $pl={5} $pr={3}>
          <ToolIcon kind="newDoc" />
          <ToolItem><ToolIcon kind="open" /><Caret /></ToolItem>
          <ToolIcon kind="save" />
          <Sep />
          <ToolItem><ToolIcon kind="undo" /><Caret /></ToolItem>
          <More $auto>»</More>
        </ToolSegment>
        <ToolSegment $w={550} $ml={3} $pl={4} $pr={6}>
          <ToolItem><ToolIcon kind="draw" />绘图</ToolItem>
          <ToolItem><SigmaIcon />汇总计算</ToolItem>
          <ToolItem><ToolIcon kind="cloud" />云检查</ToolItem>
          <ToolItem $off><ToolIcon kind="align" />平齐板顶</ToolItem>
          <ToolItem $off><ToolIcon kind="find" />查找图元</ToolItem>
          <ToolItem $off><ToolIcon kind="look" />查看钢筋量</ToolItem>
          <ToolItem $off><ToolIcon kind="batch" />批量选择</ToolItem>
          <More $auto>»</More>
        </ToolSegment>
        <ToolSegment $w={663} $ml={2} $pr={6}>
          <ViewCombo><ComboSwatch />二维<Caret $off /></ViewCombo>
          <ToolItem $off><ToolIcon kind="cube" />俯视<Caret $off /></ToolItem>
          <ToolItem $off><ToolIcon kind="orbit" />动态观察</ToolItem>
          <ToolItem $off><ToolIcon kind="local" />局部三维</ToolItem>
          <Sep />
          <ToolItem $off><ToolIcon kind="full" />全屏</ToolItem>
          <ToolItem $off><ToolIcon kind="zoom" />缩放<Caret $off /></ToolItem>
          <ToolItem $off><ToolIcon kind="pan" />平移<Caret $off /></ToolItem>
          <ToolItem $off><ToolIcon kind="rotate" />屏幕旋转<Caret $off $tight /></ToolItem>
          <Sep />
          <ToolItem $off><ToolIcon kind="floors" />选择楼层</ToolItem>
          <More $auto>»</More>
        </ToolSegment>
      </ToolRow>

      <Body>
        <NavColumn>
          <NavHeader>
            模块导航栏
            <Pin size={11} color="#fff" />
            <X size={11} color="#fff" />
          </NavHeader>
          <NavButton>工程设置</NavButton>
          <NavButton>绘图输入</NavButton>
          <ExpandBar><ExpandAllIcon /><ExpandAllIcon minus /></ExpandBar>
          <TreeFrame>
            <TreeBody>
              {navTree.map(([title, items]) => (
                <Group key={title} $open={title !== "自定义"}>
                  <GroupRow><Chevron /><DotLead /><Folder /><GroupName>{title}</GroupName></GroupRow>
                  <Leaves>
                    {items.map(([kind, label, code]) => (
                      <Leaf key={label + code}>
                        <LeafLead />
                        <LeafLabel $bg={label === "后浇带" ? "#d9d9d9" : undefined} $pr={label === "后浇带" ? 6 : 0}>
                          <TreeIcon kind={kind} />
                          <span>{label}<Code>({code})</Code></span>
                        </LeafLabel>
                      </Leaf>
                    ))}
                  </Leaves>
                </Group>
              ))}
            </TreeBody>
            <Scrollbar>
              <ScrollGap $h={18}><ChevronUp size={13} strokeWidth={3} /></ScrollGap>
              <ScrollGap $h={143} />
              <ScrollThumb />
              <ScrollGap $fill />
              <ScrollGap $h={20}><ChevronUp size={13} strokeWidth={3} style={{ transform: "rotate(180deg)" }} /></ScrollGap>
            </Scrollbar>
          </TreeFrame>
          <NavButton>单构件输入</NavButton>
          <NavButton>报表预览</NavButton>
        </NavColumn>

        <RightSide>
          <ToolbarTwo>
            <ToolItem><ToolIcon kind="add" />新建<Caret $tight /></ToolItem>
            <ToolItem><ToolIcon kind="del" />删除</ToolItem>
            <ToolItem><ToolIcon kind="copy" />复制</ToolItem>
            <ToolItem><ToolIcon kind="rename" />重命名</ToolItem>
            <Sep $r={-5} />
            <ToolItem>楼层</ToolItem>
            <FloorCombo>基础层<Caret /></FloorCombo>
            <Sep $r={-4} />
            <ToolItem><SortIcon />排序<Caret $tight /></ToolItem>
            <ToolItem><ToolIcon kind="filter" />过滤<Caret $tight /></ToolItem>
            <Sep />
            <ToolItem><ToolIcon kind="fromFloor" />从其他楼层复制构件</ToolItem>
            <ToolItem><ToolIcon kind="toFloor" />复制构件到其他楼层</ToolItem>
            <Sep />
            <ToolItem>查找<Caret $tight /></ToolItem>
            <Sep />
            <ToolItem $off><ToolIcon kind="up" />上移</ToolItem>
            <ToolItem><ToolIcon kind="down" />下移</ToolItem>
          </ToolbarTwo>
          <Split>
            <ListColumn>
              <SearchRow>
                <SearchBox>搜索构件...</SearchBox>
                <Search size={17} strokeWidth={3} />
              </SearchRow>
              <ListTree>
                <GroupRow $pad={6}><Chevron /><DotLead $w={4} /><TreeIcon kind="cast" /><GroupName>后浇带</GroupName></GroupRow>
                <Leaves $x={30}>
                  <Leaf>
                    <LeafLead $w={8} />
                    <LeafLabel $bg="#316ac5" $pr={4} $gap={8}><GearSlot><Gear /></GearSlot><Code>HJD-1</Code></LeafLabel>
                  </Leaf>
                  <Leaf>
                    <LeafLead $w={8} />
                    <LeafLabel $gap={8}><GearSlot><Gear /></GearSlot><Code>HJD-2</Code></LeafLabel>
                  </Leaf>
                </Leaves>
              </ListTree>
            </ListColumn>
            <PropPane>
              <TabStrip><Tab>属性编辑</Tab></TabStrip>
              <PropBody>
                <TableWrap>
                  <GridRow $h={23}>
                    <HeadCell />
                    <HeadCell>属性名称</HeadCell>
                    <HeadCell $hot>属性值</HeadCell>
                    <HeadCell>附加</HeadCell>
                  </GridRow>
                  {rows.map((r) => <PropRow key={r.n} r={r} />)}
                  <CircleMark width="154" height="101" viewBox="0 0 154 101">
                    <ellipse cx="77" cy="50.500" rx="73.500" ry="47" fill="none" stroke="#ff0000" strokeWidth="7" />
                  </CircleMark>
                </TableWrap>
                <ParamPanel>
                  <ParamTitle>参数图</ParamTitle>
                  <Drawing />
                </ParamPanel>
              </PropBody>
            </PropPane>
          </Split>
        </RightSide>
      </Body>

      <StatusBar>
        <StatusCell $w={148} />
        <StatusCell $w={78}>层高:<Code>3.55m</Code></StatusCell>
        <StatusCell $w={97}>底标高:<Code>-3.58m</Code></StatusCell>
        <StatusCell $w={49}><Code>0</Code></StatusCell>
        <StatusCell $w={915}>在此处选择后浇带的类型。</StatusCell>
        <StatusCell $w={70} $ml={-1}><Code>51.7 FPS</Code></StatusCell>
      </StatusBar>

      <Taskbar>
        <StartCell><FaWindows size={16} color="#fff" /></StartCell>
        <CortanaBox>
          <CortanaRing />
          <span>在这里输入你要搜索的内容</span>
          <Mic size={17} color="#9a9a9a" />
        </CortanaBox>
        <TaskApps>
          <TaskApp $w={46}>
            <svg width="21" height="18" viewBox="0 0 21 18" fill="none" stroke="#fff"><rect x="5.500" y="1.500" width="10" height="15" /><path d="M3 4H1v10h2M18 4h2v10h-2" /></svg>
          </TaskApp>
          <TaskApp $w={54}><Fan /></TaskApp>
          <TaskApp $w={48}><Swirl /></TaskApp>
          <TaskApp $w={56}><FaEdge size={24} color="#0a78d7" /></TaskApp>
          <TaskApp $w={42}><Store /></TaskApp>
          <TaskApp $w={58}><Explorer /></TaskApp>
          <TaskApp $w={45}><FaInternetExplorer size={25} color="#2f9ae8" /></TaskApp>
          <TaskApp $w={48} $active $run><AppLogo s={24} /></TaskApp>
          <TaskApp $w={50} $run><Notes /></TaskApp>
          <TaskApp $w={50} $run><GreenE /></TaskApp>
          <TaskApp $w={45} $run><BlueG /></TaskApp>
        </TaskApps>
        <TrayText $w={50} $ml={55}><span>20%</span><span>CPU使用</span></TrayText>
        <Tray>
          <ChevronUp size={16} />
          <Power />
          <Wifi size={16} />
          <Volume1 size={16} />
          <Keyboard size={24} strokeWidth={1.2} />
          <ImeLabel>中</ImeLabel>
          <SogouS />
        </Tray>
        <TrayText $w={62}><span>16:24</span><span>2017/11/5</span></TrayText>
        <NoticeCell><NoticeIcon /><NoticeBadge>2</NoticeBadge></NoticeCell>
      </Taskbar>
    </Page>
  );
}
